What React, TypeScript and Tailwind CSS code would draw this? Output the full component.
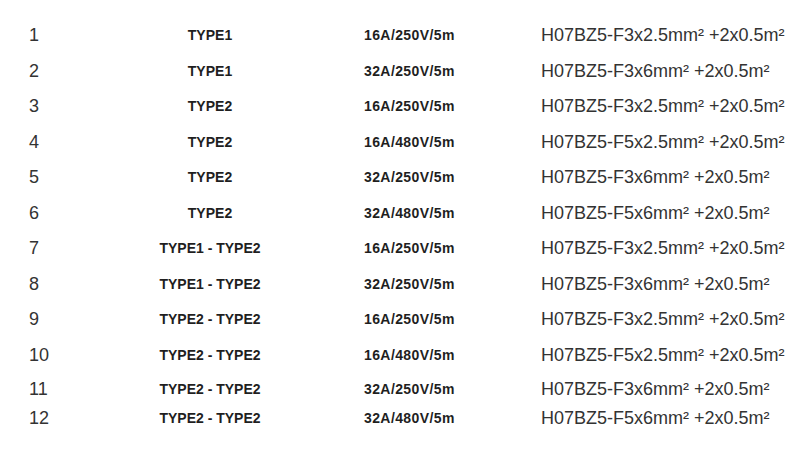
const ROWS = [
  { n: "1", type: "TYPE1", spec: "16A/250V/5m", cable: "H07BZ5-F3x2.5mm² +2x0.5m²" },
  { n: "2", type: "TYPE1", spec: "32A/250V/5m", cable: "H07BZ5-F3x6mm² +2x0.5m²" },
  { n: "3", type: "TYPE2", spec: "16A/250V/5m", cable: "H07BZ5-F3x2.5mm² +2x0.5m²" },
  { n: "4", type: "TYPE2", spec: "16A/480V/5m", cable: "H07BZ5-F5x2.5mm² +2x0.5m²" },
  { n: "5", type: "TYPE2", spec: "32A/250V/5m", cable: "H07BZ5-F3x6mm² +2x0.5m²" },
  { n: "6", type: "TYPE2", spec: "32A/480V/5m", cable: "H07BZ5-F5x6mm² +2x0.5m²" },
  { n: "7", type: "TYPE1 - TYPE2", spec: "16A/250V/5m", cable: "H07BZ5-F3x2.5mm² +2x0.5m²" },
  { n: "8", type: "TYPE1 - TYPE2", spec: "32A/250V/5m", cable: "H07BZ5-F3x6mm² +2x0.5m²" },
  { n: "9", type: "TYPE2 - TYPE2", spec: "16A/250V/5m", cable: "H07BZ5-F3x2.5mm² +2x0.5m²" },
  { n: "10", type: "TYPE2 - TYPE2", spec: "16A/480V/5m", cable: "H07BZ5-F5x2.5mm² +2x0.5m²" },
  { n: "11", type: "TYPE2 - TYPE2", spec: "32A/250V/5m", cable: "H07BZ5-F3x6mm² +2x0.5m²" },
  { n: "12", type: "TYPE2 - TYPE2", spec: "32A/480V/5m", cable: "H07BZ5-F5x6mm² +2x0.5m²" },
]

// the last two rows sit closer together in the source sheet
const HEIGHTS = ["h-[35.5px]", "h-[35.5px]", "h-[35.5px]", "h-[35.5px]", "h-[35.5px]", "h-[35.5px]", "h-[35.5px]", "h-[35.5px]", "h-[35.5px]", "h-[35.5px]", "h-[32px]", "h-[22px]"]

export default function App() {
  return (
    <div className="w-[800px] h-[464px] bg-white pt-[18px] pl-[29px] font-['Liberation_Sans',Arial,sans-serif] text-[#1f1f1f]">
      {ROWS.map((row, i) => (
        <div key={row.n} className={`grid grid-cols-[99px_164px_249px_1fr] items-center ${HEIGHTS[i]}`}>
          <div className="text-[18px] text-[#333]">{row.n}</div>
          <div className="text-center text-[14px] font-bold">{row.type}</div>
          <div className="pl-[72px] text-[14px] font-bold tracking-[0.4px]">{row.spec}</div>
          <div className="text-[18px] text-[#333] whitespace-nowrap">{row.cable}</div>
        </div>
      ))}
    </div>
  )
}
